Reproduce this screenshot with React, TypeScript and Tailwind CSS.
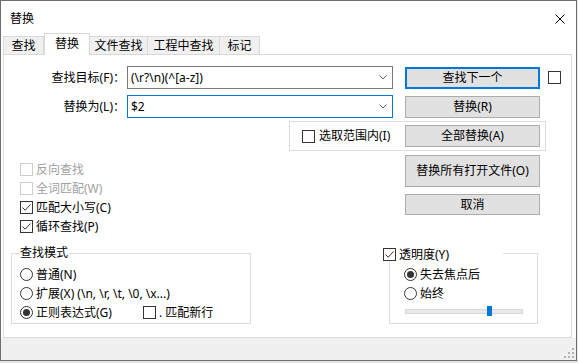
import React from "react";

function CheckBox({ checked, disabled }: { checked?: boolean; disabled?: boolean }) {
  return (
    <span
      className={`flex h-[13px] w-[13px] shrink-0 items-center justify-center border bg-white ${
        disabled ? "border-[#cccccc]" : "border-[#333333]"
      }`}
    >
      {checked && (
        <svg width="11" height="11" viewBox="0 0 11 11">
          <path d="M1.5 5.5 L4.2 8.2 L9.5 2.5" fill="none" stroke="#333333" strokeWidth="1" />
        </svg>
      )}
    </span>
  );
}

function Radio({ checked }: { checked?: boolean }) {
  return (
    <span className="flex h-[13px] w-[13px] shrink-0 items-center justify-center rounded-full border border-[#333333] bg-white">
      {checked && <span className="h-[7px] w-[7px] rounded-full bg-[#333333]" />}
    </span>
  );
}

function Btn({
  children,
  primary,
  className = "",
}: {
  children: React.ReactNode;
  primary?: boolean;
  className?: string;
}) {
  return (
    <div
      className={`flex w-[135px] shrink-0 items-center justify-center bg-[#e1e1e1] text-black ${
        primary ? "border-2 border-[#0078d7]" : "border border-[#adadad]"
      } ${className}`}
    >
      {children}
    </div>
  );
}

function Combo({ value, focused }: { value: string; focused?: boolean }) {
  return (
    <div
      className={`flex h-[23px] w-[266px] shrink-0 items-center border bg-white pl-[3px] pr-[5px] ${
        focused ? "border-[#0078d7]" : "border-[#7a7a7a]"
      }`}
    >
      <span className="flex-1 text-black">{value}</span>
      <svg width="8" height="5" viewBox="0 0 8 5">
        <path d="M0.5 0.5 L4 4 L7.5 0.5" fill="none" stroke="#606060" strokeWidth="1" />
      </svg>
    </div>
  );
}

function Row({ children }: { children: React.ReactNode }) {
  return <div className="flex h-[19px] items-center gap-[3px]">{children}</div>;
}

export default function App() {
  return (
    <div className="h-[363px] w-[578px] bg-[#e4e4e4] font-['Noto_Sans','Noto_Sans_CJK_SC',sans-serif] text-[12px] leading-[16px] text-black">
      <div className="flex h-[361px] w-[577px] flex-col border border-[#6e6e6e] bg-white">
        {/* title bar */}
        <div className="flex h-[32px] shrink-0 items-center justify-between pl-[9px] pr-[11px] pt-[4px]">
          <span className="text-[12px]">替换</span>
          <svg width="10" height="10" viewBox="0 0 10 10">
            <path d="M0.5 0.5 L9.5 9.5 M9.5 0.5 L0.5 9.5" stroke="#000" strokeWidth="1" />
          </svg>
        </div>

        {/* tabs */}
        <div className="flex h-[21px] shrink-0 items-end pl-[2px]">
          <div className="flex h-[18px] w-[41px] items-center justify-center border border-b-0 border-[#d9d9d9] bg-[#f0f0f0]">
            查找
          </div>
          <div className="relative z-10 -mb-px flex h-[22px] w-[46px] items-center justify-center border border-b-0 border-[#d9d9d9] bg-white pb-[2px]">
            替换
          </div>
          <div className="-ml-px flex h-[18px] w-[59px] items-center justify-center border border-b-0 border-[#d9d9d9] bg-[#f0f0f0]">
            文件查找
          </div>
          <div className="-ml-px flex h-[18px] w-[73px] items-center justify-center border border-b-0 border-[#d9d9d9] bg-[#f0f0f0]">
            工程中查找
          </div>
          <div className="-ml-px flex h-[18px] w-[41px] items-center justify-center border border-b-0 border-[#d9d9d9] bg-[#f0f0f0]">
            标记
          </div>
        </div>

        {/* panel */}
        <div className="ml-[2px] flex h-[284px] w-[569px] shrink-0 flex-col border border-[#d9d9d9] bg-white">
          <div className="mt-[11px] flex h-[23px] items-center">
            <div className="w-[122px] pr-[1px] text-right">查找目标(F)：</div>
            <div className="ml-[1px]">
              <Combo value="(\r?\n)(^[a-z])" />
            </div>
            <Btn primary className="ml-[12px] h-[22px]">
              查找下一个
            </Btn>
            <div className="ml-[8px]">
              <CheckBox />
            </div>
          </div>

          <div className="mt-[6px] flex h-[23px] items-center">
            <div className="w-[122px] pr-[1px] text-right">替换为(L)：</div>
            <div className="ml-[1px]">
              <Combo value="$2" focused />
            </div>
            <Btn className="ml-[12px] h-[22px]">替换(R)</Btn>
          </div>

          <div className="ml-[285px] mt-[3px] flex h-[30px] w-[257px] items-center border border-[#dcdcdc] pl-[12px] pr-[5px]">
            <CheckBox />
            <span className="ml-[4px]">选取范围内(I)</span>
            <Btn className="ml-auto h-[22px]">全部替换(A)</Btn>
          </div>

          <div className="flex">
            {/* left column */}
            <div className="w-[285px] shrink-0">
              <div className="mt-[9px] pl-[16px]">
                <Row>
                  <CheckBox disabled />
                  <span className="text-[#a0a0a0]">反向查找</span>
                </Row>
                <Row>
                  <CheckBox disabled />
                  <span className="text-[#a0a0a0]">全词匹配(W)</span>
                </Row>
                <Row>
                  <CheckBox checked />
                  <span>匹配大小写(C)</span>
                </Row>
                <Row>
                  <CheckBox checked />
                  <span>循环查找(P)</span>
                </Row>
              </div>

              <div className="relative ml-[7px] mt-[17px] h-[71px] w-[240px] border border-[#dcdcdc] pl-[8px] pt-[11px]">
                <span className="absolute -top-[9px] left-[7px] bg-white px-[1px]">查找模式</span>
                <Row>
                  <Radio />
                  <span>普通(N)</span>
                </Row>
                <Row>
                  <Radio />
                  <span>扩展(X) (\n, \r, \t, \0, \x...)</span>
                </Row>
                <div className="flex h-[19px] items-center">
                  <div className="flex w-[123px] items-center gap-[3px]">
                    <Radio checked />
                    <span>正则表达式(G)</span>
                  </div>
                  <CheckBox />
                  <span className="ml-[3px]">. 匹配新行</span>
                </div>
              </div>
            </div>

            {/* right column */}
            <div className="flex flex-col">
              <Btn className="ml-[116px] mt-[4px] h-[32px]">替换所有打开文件(O)</Btn>
              <Btn className="ml-[116px] mt-[7px] h-[21px]">取消</Btn>

              <div className="relative ml-[100px] mt-[38px] h-[71px] w-[149px] border border-[#dcdcdc] pl-[14px] pt-[11px]">
                <div className="absolute -left-[7px] -top-[7px] flex h-[15px] w-[120px] items-center gap-[3px] bg-white">
                  <CheckBox checked />
                  <span>透明度(Y)</span>
                </div>
                <Row>
                  <Radio checked />
                  <span>失去焦点后</span>
                </Row>
                <Row>
                  <Radio />
                  <span>始终</span>
                </Row>
                <div className="relative ml-[1px] mt-[6px] h-[5px] w-[118px] border border-[#d6d6d6] bg-[#e7eaea]">
                  <span className="absolute -top-[4px] left-[81px] h-[10px] w-[5px] bg-[#0078d7]" />
                </div>
              </div>
            </div>
          </div>
        </div>

        {/* bottom strip */}
        <div className="flex flex-1 items-end justify-end bg-[#f0f0f0] pb-[1px] pr-[1px]">
          <svg width="11" height="11" viewBox="0 0 11 11">
            <rect x="8" y="0" width="2" height="2" fill="#b4b4b4" />
            <rect x="4" y="4" width="2" height="2" fill="#b4b4b4" />
            <rect x="8" y="4" width="2" height="2" fill="#b4b4b4" />
            <rect x="0" y="8" width="2" height="2" fill="#b4b4b4" />
            <rect x="4" y="8" width="2" height="2" fill="#b4b4b4" />
            <rect x="8" y="8" width="2" height="2" fill="#b4b4b4" />
          </svg>
        </div>
      </div>
    </div>
  );
}
